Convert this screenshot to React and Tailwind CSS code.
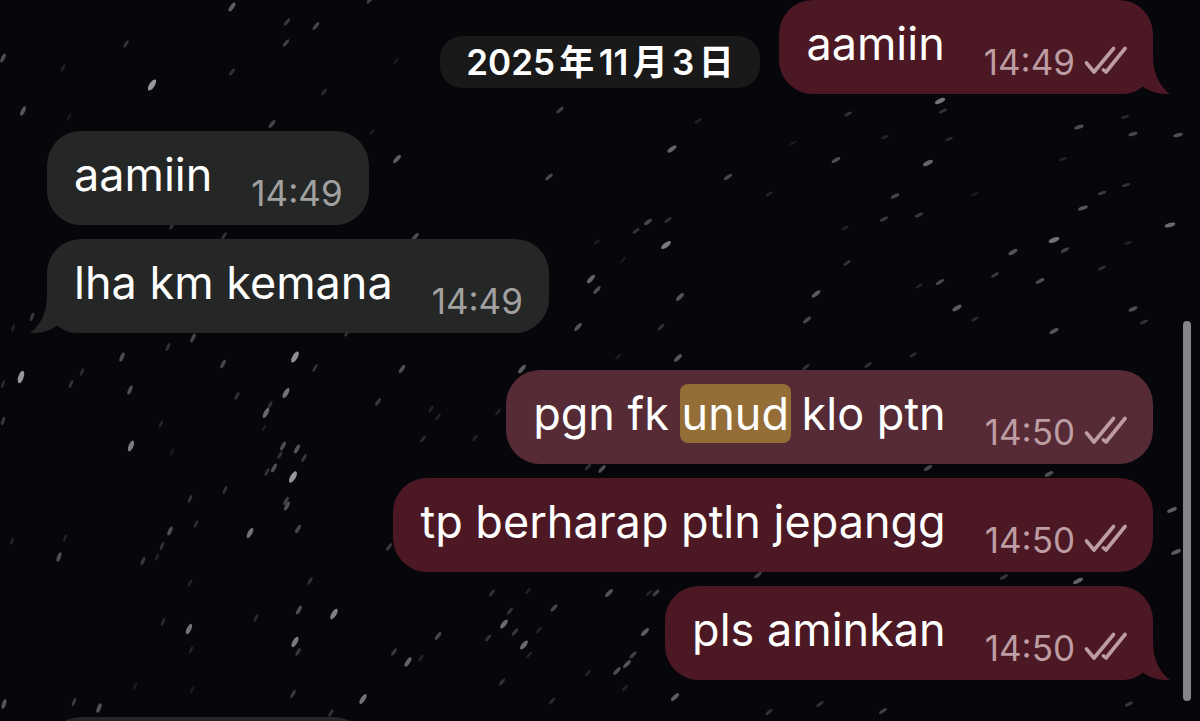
import React from "react";

// [x, y, brightness] of every star streak on the wallpaper
const STARS = [
  [232, 7, 0.6], [287, 22, 0.35], [316, 26, 0.45], [286, 43, 0.4], [126, 44, 0.3], [3, 58, 0.5],
  [63, 68, 0.2], [152, 85, 1], [232, 72, 0.3], [324, 92, 0.25], [23, 111, 0.55], [272, 124, 0.45],
  [69, 117, 0.15], [370, 0, 0.4], [396, 61, 0.15], [372, 132, 0.15], [397, 159, 0.6], [224, 236, 0.3],
  [172, 226, 0.3], [32, 317, 0.35], [193, 338, 0.45], [13, 328, 0.2], [168, 347, 0.3], [347, 333, 0.3],
  [415, 237, 0.5], [648, 222, 0.45], [636, 231, 0.3], [668, 220, 0.3], [666, 245, 0.8], [591, 279, 0.65],
  [597, 290, 0.5], [680, 297, 0.55], [578, 327, 0.55], [661, 327, 0.3], [678, 358, 0.55], [618, 357, 0.15],
  [402, 369, 0.5], [522, 369, 0.6], [431, 409, 0.2], [438, 417, 0.2], [423, 439, 0.25], [475, 438, 0.2],
  [498, 412, 0.2], [597, 242, 0.15], [623, 260, 0.15], [560, 110, 0.4], [672, 149, 0.65], [549, 177, 0.45],
  [728, 177, 0.45], [848, 114, 0.3], [940, 101, 0.75], [943, 111, 0.3], [836, 160, 0.5], [885, 137, 0.2],
  [949, 139, 0.25], [928, 163, 0.65], [895, 196, 0.45], [975, 194, 0.15], [884, 219, 0.35], [919, 215, 0.35],
  [769, 194, 0.2], [845, 228, 0.2], [1079, 127, 0.5], [1125, 117, 0.25], [1133, 134, 0.45], [1178, 135, 0.5],
  [1063, 159, 0.2], [1126, 185, 0.3], [1102, 193, 0.35], [1083, 208, 0.55], [1170, 225, 0.7], [1054, 240, 0.75],
  [1065, 250, 0.4], [1013, 252, 0.55], [1128, 243, 0.2], [1102, 268, 0.3], [1040, 281, 0.5], [995, 275, 0.35],
  [940, 282, 0.45], [919, 286, 0.2], [957, 308, 0.6], [816, 294, 0.6], [807, 320, 0.45], [1133, 309, 0.5],
  [1144, 322, 0.3], [1054, 331, 0.55], [975, 319, 0.25], [913, 355, 0.25], [868, 365, 0.3], [806, 367, 0.3],
  [847, 263, 0.3], [698, 121, 0.2], [793, 143, 0.15], [928, 468, 0.45], [1049, 474, 0.5], [1172, 510, 0.6],
  [1176, 552, 0.6], [1078, 581, 0.65], [1004, 577, 0.35], [758, 575, 0.4], [656, 593, 0.4], [649, 593, 0.2],
  [645, 632, 0.6], [675, 697, 0.6], [820, 704, 0.3], [769, 712, 0.3], [883, 711, 0.4], [1129, 704, 0.35],
  [1187, 610, 0.4], [21, 377, 1], [3, 384, 0.25], [122, 357, 0.5], [82, 372, 0.25], [71, 384, 0.3],
  [130, 390, 0.5], [131, 446, 0.8], [161, 424, 0.2], [3, 421, 0.35], [223, 364, 0.45], [237, 396, 0.3],
  [295, 357, 0.95], [315, 368, 0.3], [286, 393, 0.75], [266, 413, 0.7], [270, 405, 0.3], [264, 428, 0.15],
  [283, 446, 0.5], [297, 449, 0.55], [280, 455, 0.3], [304, 458, 0.35], [274, 468, 0.5], [267, 472, 0.3],
  [293, 477, 1], [286, 501, 0.4], [287, 506, 0.5], [250, 533, 0.75], [298, 529, 0.45], [225, 490, 0.3],
  [190, 499, 0.3], [170, 531, 0.5], [196, 524, 0.25], [162, 546, 0.3], [157, 557, 0.2], [143, 561, 0.35],
  [59, 557, 0.5], [65, 538, 0.2], [12, 541, 0.2], [378, 402, 0.35], [389, 547, 0.35], [310, 581, 0.3],
  [299, 610, 0.5], [334, 614, 0.85], [189, 629, 0.75], [190, 583, 0.2], [163, 622, 0.25], [256, 618, 0.25],
  [295, 642, 0.8], [298, 652, 0.35], [191, 650, 0.2], [394, 652, 0.35], [363, 699, 0.75], [293, 694, 0.35],
  [74, 702, 0.35], [99, 708, 0.55], [4, 704, 0.55], [135, 686, 0.15], [331, 713, 0.3], [192, 690, 0.15],
  [172, 452, 0.15], [408, 662, 0.65], [438, 636, 0.45], [492, 593, 0.3], [504, 624, 0.7], [510, 611, 0.3],
  [524, 645, 0.7], [529, 655, 0.2], [515, 632, 0.35], [488, 638, 0.3], [554, 608, 0.45], [528, 591, 0.2],
  [539, 630, 0.2], [609, 593, 0.55], [633, 655, 0.4], [627, 664, 0.55], [617, 671, 0.5], [502, 682, 0.3],
  [602, 469, 0.5], [588, 467, 0.3], [421, 658, 0.2], [552, 701, 0.25], [625, 688, 0.2], [588, 673, 0.2],
];

function StarField() {
  return (
    <svg
      className="absolute inset-0 h-full w-full"
      viewBox="0 0 1200 721"
      preserveAspectRatio="xMidYMid slice"
      aria-hidden="true"
    >
      {STARS.map(([x, y, light]) => {
        const angle = -(72 - x / 24 - (y < 250 ? 8 : 0));
        return (
          <ellipse
            key={`${x}-${y}`}
            cx={x}
            cy={y}
            rx={3.4 + light * 3}
            ry={1 + light * 1.7}
            fill="#d4d4d8"
            opacity={light * 0.7}
            transform={`rotate(${angle} ${x} ${y})`}
          />
        );
      })}
    </svg>
  );
}

function Tail({ className }) {
  return (
    <svg className={className} width="40" height="40" viewBox="0 0 40 40" fill="currentColor" aria-hidden="true">
      <path d="M0 0H23C23.2 8 23.500 14 25.500 19C28 27.500 33.500 35.500 40 40C30 40.500 20 38 12.700 32.500L0 32Z" />
    </svg>
  );
}

function ReadTicks() {
  return (
    <svg
      className="mb-[6px] ml-2 h-8 w-11 shrink-0"
      viewBox="0 0 44 32"
      fill="none"
      stroke="currentColor"
      strokeWidth="3.6"
      strokeLinecap="round"
      strokeLinejoin="round"
      role="img"
      aria-label="Read"
    >
      <path d="M3.500 19L11 28L30.500 4.500" />
      <path d="M20.500 25.800L23 28L42 4.500" />
    </svg>
  );
}

function Bubble({ time, outgoing, tail, selected, children }) {
  const tone = outgoing
    ? selected
      ? "bg-[#562b35] text-[#562b35]"
      : "bg-[#4b1823] text-[#4b1823]"
    : "bg-[#252726] text-[#252726]";
  const corner = tail ? (outgoing ? "rounded-br-[30px]" : "rounded-bl-[30px]") : "";
  return (
    <li
      className={`relative flex h-[94px] items-end rounded-[34px] pl-[27px] pr-[26px] ${tone} ${corner} ${
        outgoing ? "self-end" : "self-start"
      }`}
    >
      {tail && (
        <Tail
          className={
            outgoing ? "absolute bottom-0 -right-[17px]" : "absolute bottom-0 -left-[17px] -scale-x-100"
          }
        />
      )}
      <p className="relative mb-5 whitespace-nowrap text-[45px] leading-[60px] text-white">{children}</p>
      <div
        className={`relative mb-3 ml-[39px] flex items-end ${outgoing ? "text-[#bd9da3]" : "text-[#a0a1a0]"}`}
      >
        <time className="text-[35px] leading-10">{time}</time>
        {outgoing && <ReadTicks />}
      </div>
    </li>
  );
}

function Group({ children }) {
  return <ul className="flex flex-col gap-[14px]">{children}</ul>;
}

export default function App() {
  return (
    <main className="relative h-screen overflow-hidden bg-[#07070b] font-['Inter','Noto_Sans_CJK_JP',sans-serif]">
      <StarField />

      <div className="relative flex flex-col gap-[37px] px-[47px]">
        <Group>
          <Bubble time="14:49" outgoing tail>aamiin</Bubble>
        </Group>
        <Group>
          <Bubble time="14:49">aamiin</Bubble>
          <Bubble time="14:49" tail>lha km kemana</Bubble>
        </Group>
        <Group>
          <Bubble time="14:50" outgoing selected>
            pgn fk <mark className="-mx-[2px] rounded-lg bg-[#946e36] px-[2px] py-[2px] text-white">unud</mark> klo ptn
          </Bubble>
          <Bubble time="14:50" outgoing>tp berharap ptln jepangg</Bubble>
          <Bubble time="14:50" outgoing tail>pls aminkan</Bubble>
        </Group>
        <div className="h-[94px] w-[321px] rounded-[34px] bg-[#252726]" />
      </div>

      <div className="absolute inset-x-0 top-9 flex justify-center">
        <h2 className="rounded-[22px] bg-[#191919] px-[26px] text-[35px] font-semibold leading-[52px] text-white [text-autospace:normal]">
          2025年11月3日
        </h2>
      </div>

      <div className="absolute bottom-5 right-[9px] h-[380px] w-2 rounded-full bg-[#858587]" />
    </main>
  );
}
